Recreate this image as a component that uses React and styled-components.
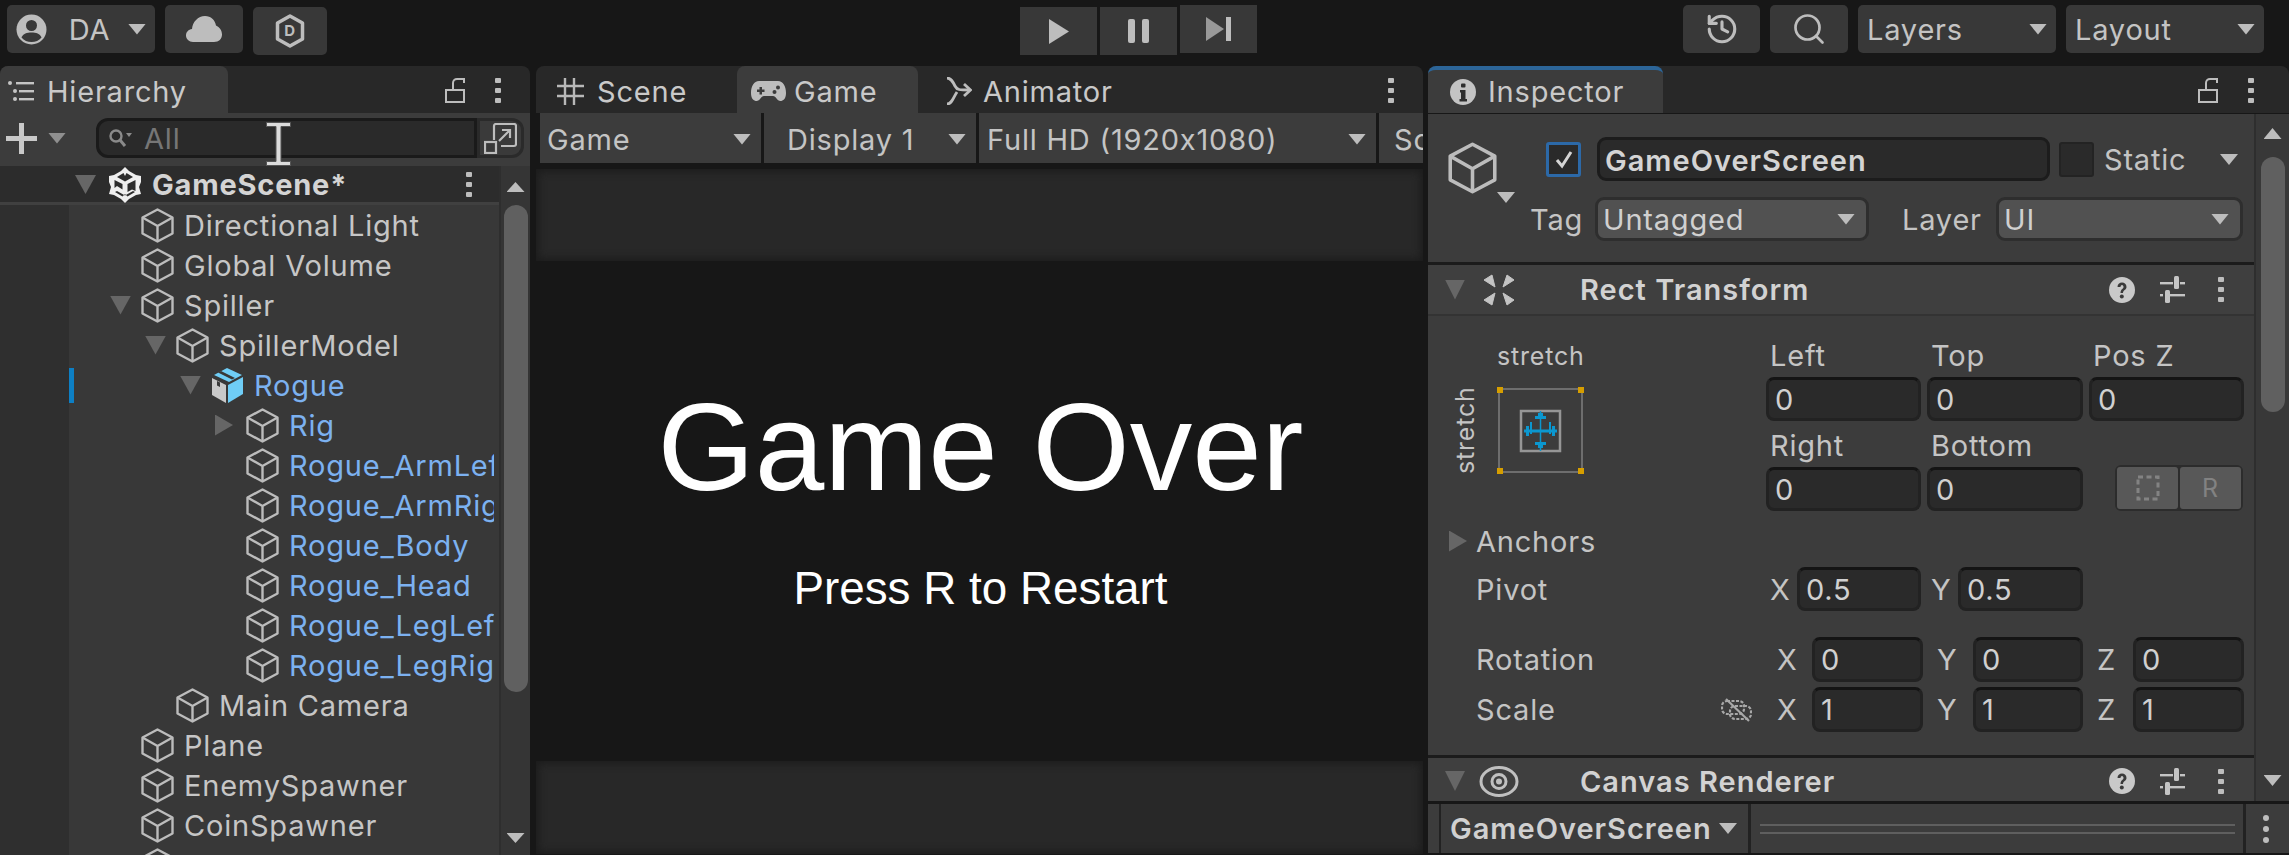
import React from "react";
import styled, { createGlobalStyle } from "styled-components";
import { History, Search } from "lucide-react";

const text = "#c4c4c4";
const blue = "#7cb1f0";
const panel = "#3c3c3c";
const tabbar = "#282828";
const dark = "#171717";
const fieldBg = "#2a2a2a";

const GlobalStyle = createGlobalStyle`
  html, body { margin: 0; padding: 0; background: ${dark}; }
  * { box-sizing: border-box; }
`;

const Page = styled.div`
  width: 2289px;
  height: 855px;
  overflow: hidden;
  background: ${dark};
  color: ${text};
  font-family: Inter, "Noto Sans", sans-serif;
  font-size: 29px;
  letter-spacing: 0.8px;
  font-feature-settings: "calt" 0;
`;

const TopBar = styled.div`
  height: 66px;
  padding-left: 7px;
  display: grid;
  grid-template-columns: 1013px 237px 1fr;
`;
const ToolGroup = styled.div`
  display: flex;
  gap: ${p => p.$gap || 10}px;
  justify-content: ${p => p.$end ? "flex-end" : "flex-start"};
  padding-right: ${p => p.$end ? 25 : 0}px;
`;
const ToolButton = styled.div`
  width: ${p => p.$w}px;
  height: 48px;
  margin-top: ${p => p.$top ?? 5}px;
  background: #383838;
  border-radius: ${p => p.$square ? 0 : 5}px;
  display: flex;
  align-items: center;
  justify-content: ${p => p.$between ? "space-between" : "center"};
  padding: 0 ${p => p.$between ? 9 : 0}px;
  color: ${text};
`;
const AccountName = styled.span`
  margin-left: 4px;
`;

const Main = styled.div`
  display: flex;
  height: 789px;
`;
const Panel = styled.div`
  width: ${p => p.$w}px;
  margin-left: ${p => p.$ml || 0}px;
  display: flex;
  flex-direction: column;
  position: relative;
`;

const TabBar = styled.div`
  height: 47px;
  flex: none;
  background: ${tabbar};
  border-radius: 8px 8px 0 0;
  display: flex;
  align-items: stretch;
  padding-right: ${p => p.$pr || 0}px;
`;
const Tab = styled.div`
  width: ${p => p.$w}px;
  padding-left: ${p => p.$pl}px;
  display: flex;
  align-items: center;
  gap: ${p => p.$gap}px;
  background: ${p => p.$active ? panel : "transparent"};
  border-radius: 8px 8px 0 0;
  border-top: ${p => p.$focus ? "4px solid #2c6598" : "none"};
  white-space: nowrap;
  color: #c9c9c9;
  padding-top: ${p => p.$focus ? 0 : 3}px;
`;
const TabTools = styled.div`
  margin-left: auto;
  display: flex;
  align-items: center;
  gap: ${p => p.$gap}px;
  padding-top: 1px;
  padding-right: ${p => p.$pr || 0}px;
`;

const KebabWrap = styled.div`
  display: flex;
  flex-direction: column;
  gap: 5px;
  width: 6px;
  margin-left: ${p => p.$ml || 0}px;
`;
const KebabDot = styled.span`
  width: 6px;
  height: 5px;
  background: #bdbdbd;
  border-radius: 1px;
`;
const Kebab = ({ ml }) => (
  <KebabWrap $ml={ml}>
    <KebabDot />
    <KebabDot />
    <KebabDot />
  </KebabWrap>
);

const Caret = styled.span`
  display: inline-block;
  flex: none;
  width: ${p => p.$w || 18}px;
  height: ${p => p.$h || 11}px;
  margin-top: ${p => p.$mt || 0}px;
  background: ${p => p.$color || "#bdbdbd"};
  clip-path: ${p => p.$right
    ? "polygon(0 0, 100% 50%, 0 100%)"
    : p.$up
      ? "polygon(50% 0, 100% 100%, 0 100%)"
      : "polygon(0 0, 100% 0, 50% 100%)"};
`;

/* hierarchy */
const SearchRow = styled.div`
  height: 53px;
  flex: none;
  background: ${panel};
  display: flex;
  align-items: center;
  padding: 0 6px 3px 6px;
`;
const PlusBox = styled.div`
  width: 90px;
  display: flex;
  align-items: center;
  gap: 11px;
`;
const SearchField = styled.div`
  width: 381px;
  height: 40px;
  background: ${fieldBg};
  border: 3px solid #1a1a1a;
  border-radius: 12px 0 0 12px;
  display: flex;
  align-items: center;
  padding-left: 9px;
  gap: 12px;
  color: #767676;
`;
const ExpandButton = styled.div`
  width: 47px;
  height: 40px;
  background: #3a3a3a;
  border: 3px solid #2a2a2a;
  border-radius: 0 12px 12px 0;
  display: flex;
  align-items: center;
  justify-content: center;
`;
const TextCursor = styled.svg`
  position: absolute;
  left: 266px;
  top: 56px;
`;

const HierarchyBody = styled.div`
  flex: 1;
  display: flex;
  min-height: 0;
  overflow: hidden;
`;
const TreeColumn = styled.div`
  width: 499px;
  flex: none;
  background: linear-gradient(to right, #2f2f2f 69px, #383838 69px);
`;
const SceneRow = styled.div`
  height: 39px;
  flex: none;
  background: #2c2c2c;
  border-bottom: 3px solid #404040;
  display: flex;
  align-items: center;
  padding: 1px 27px 0 75px;
  font-weight: 700;
  color: #d4d4d4;
`;
const SceneArrow = styled.div`
  width: 34px;
  flex: none;
  display: flex;
`;
const SceneName = styled.span`
  margin-left: 11px;
  flex: 1;
`;
const TreeRow = styled.div`
  height: 40px;
  margin-left: 69px;
  padding-left: ${p => 41 + (p.$depth - 1) * 35}px;
  padding-right: 5px;
  display: flex;
  align-items: center;
  position: relative;
  color: ${p => p.$link ? blue : "#c6c6c6"};
  &::before {
    content: "";
    display: ${p => p.$changed ? "block" : "none"};
    position: absolute;
    left: 0;
    top: 3px;
    width: 5px;
    height: 35px;
    background: #0d7fc4;
  }
`;
const ArrowSlot = styled.div`
  width: 31px;
  flex: none;
  display: flex;
  align-items: center;
`;
const TreeLabel = styled.span`
  margin-left: 10px;
  flex: 1;
  min-width: 0;
  overflow: hidden;
  white-space: nowrap;
`;

const ScrollColumn = styled.div`
  width: 31px;
  flex: none;
  background: #353535;
  border-left: 2px solid #2e2e2e;
  display: flex;
  flex-direction: column;
  align-items: center;
  padding-top: ${p => p.$pt}px;
  padding-bottom: ${p => p.$pb}px;
`;
const ScrollThumb = styled.div`
  width: 24px;
  height: ${p => p.$h}px;
  margin-top: ${p => p.$mt}px;
  margin-bottom: auto;
  background: #606060;
  border-radius: 12px;
`;

/* game view */
const GameBar = styled.div`
  height: 50px;
  flex: none;
  display: flex;
  gap: 3px;
  padding-left: 4px;
  overflow: hidden;
`;
const GameSelect = styled.div`
  width: ${p => p.$w}px;
  flex: none;
  background: ${panel};
  display: flex;
  align-items: center;
  justify-content: space-between;
  padding: 2px 10px 0 ${p => p.$pl}px;
  white-space: nowrap;
`;
const GameView = styled.div`
  flex: 1;
  margin-top: 6px;
  display: flex;
  flex-direction: column;
`;
const Letterbox = styled.div`
  height: ${p => p.$h}px;
  flex: none;
  background: #282828;
  box-shadow: inset 0 0 9px 2px #1b1b1b;
`;
const GameCanvas = styled.div`
  height: 500px;
  flex: none;
  background: ${dark};
  display: flex;
  flex-direction: column;
  align-items: center;
  padding-left: 2px;
  color: #fff;
  font-family: "Liberation Sans", Arial, sans-serif;
  letter-spacing: 0;
`;
const GameOver = styled.div`
  font-size: 125px;
  line-height: 142px;
  margin-top: 115px;
`;
const Restart = styled.div`
  font-size: 45.8px;
  line-height: 54px;
  margin-top: 44px;
`;

/* inspector */
const InspectorMain = styled.div`
  height: 687px;
  margin-top: 1px;
  flex: none;
  display: flex;
`;
const InspectorBody = styled.div`
  width: 826px;
  flex: none;
  background: ${panel};
`;
const ObjectBlock = styled.div`
  height: 148px;
  padding-top: 23px;
`;
const NameRow = styled.div`
  height: 44px;
  display: flex;
  padding-left: 20px;
`;
const IconSlot = styled.div`
  width: 98px;
  height: 44px;
  flex: none;
  display: flex;
  align-items: flex-start;
  padding-top: 5px;
`;
const CheckBox = styled.div`
  width: 35px;
  height: 35px;
  margin-top: 5px;
  flex: none;
  border-radius: 3px;
  background: #2a2a2a;
  border: ${p => p.$on ? "3px solid #2c69a8" : "2px solid #232323"};
  display: flex;
  align-items: center;
  justify-content: center;
`;
const NameField = styled.div`
  width: 453px;
  height: 44px;
  margin: 0 9px 0 16px;
  flex: none;
  background: ${fieldBg};
  border: 3px solid #1c1c1c;
  border-radius: 9px;
  padding: 2px 0 0 5px;
  display: flex;
  align-items: center;
  color: #d4d4d4;
  font-weight: 600;
  letter-spacing: 1px;
`;
const StaticLabel = styled.div`
  margin-left: 10px;
  width: 116px;
  line-height: 46px;
`;
const TagRow = styled.div`
  height: 44px;
  margin-top: 16px;
  display: flex;
  align-items: center;
  padding-left: 102px;
`;
const TagLabel = styled.span`
  width: ${p => p.$w}px;
  margin-left: ${p => p.$ml || 0}px;
  flex: none;
`;
const TagSelect = styled.div`
  width: ${p => p.$w}px;
  height: 44px;
  flex: none;
  background: #515151;
  border: 3px solid #2e2e2e;
  border-radius: 9px;
  display: flex;
  align-items: center;
  justify-content: space-between;
  padding: 0 11px 0 5px;
  color: #d0d0d0;
`;
const Divider = styled.div`
  height: 3px;
  background: #1b1b1b;
`;
const ComponentHeader = styled.div`
  height: ${p => p.$h}px;
  background: #3f3f3f;
  border-bottom: ${p => p.$line ? "2px solid #333" : "none"};
  display: flex;
  align-items: center;
  padding: ${p => p.$pt || 0}px 30px 0 17px;
`;
const HeaderIcon = styled.div`
  width: 32px;
  margin-left: 18px;
  display: flex;
  justify-content: center;
  & > svg { flex: none; }
`;
const HeaderTitle = styled.div`
  margin-left: 65px;
  font-weight: 600;
  font-size: 29px;
  letter-spacing: 1px;
  color: #d2d2d2;
  flex: 1;
`;
const HeaderTools = styled.div`
  display: flex;
  align-items: center;
  gap: 25px;
`;

const RectBody = styled.div`
  height: 439px;
`;
const RectTop = styled.div`
  display: flex;
  padding-top: 25px;
`;
const AnchorColumn = styled.div`
  width: 338px;
  flex: none;
  display: grid;
  grid-template-columns: 44px 87px;
  grid-template-rows: 30px 87px;
  row-gap: 16px;
  padding-left: 25px;
  font-size: 25px;
`;
const AnchorTop = styled.div`
  grid-column: 2;
  text-align: center;
  line-height: 30px;
  white-space: nowrap;
`;
const AnchorSide = styled.div`
  grid-column: 1;
  writing-mode: vertical-rl;
  transform: rotate(180deg);
  text-align: center;
  line-height: 24px;
  justify-self: start;
`;
const FieldGrid = styled.div`
  display: grid;
  grid-template-columns: 155px 156px 155px;
  column-gap: 6px;
  row-gap: 10px;
`;
const FieldCell = styled.div`
  display: flex;
  flex-direction: column;
  gap: 6px;
`;
const SmallLabel = styled.div`
  height: 30px;
  line-height: 30px;
  padding-left: 4px;
`;
const NumField = styled.div`
  width: ${p => p.$w ? `${p.$w}px` : "100%"};
  height: ${p => p.$h || 44}px;
  flex: none;
  background: ${fieldBg};
  border: 3px solid #222;
  border-top-color: #141414;
  border-radius: 8px;
  padding-left: 6px;
  display: flex;
  align-items: center;
  color: #d0d0d0;
`;
const ResetPair = styled.div`
  grid-column: 3;
  align-self: end;
  justify-self: end;
  width: 128px;
  height: 46px;
  margin-right: 1px;
  display: flex;
  gap: 2px;
  background: #2c2c2c;
  border-radius: 6px;
  padding: 2px;
`;
const ResetButton = styled.div`
  flex: 1;
  background: #585858;
  border-radius: 3px;
  display: flex;
  align-items: center;
  justify-content: center;
  color: #828282;
  font-size: 25px;
`;
const PropertyRow = styled.div`
  display: flex;
  align-items: center;
  padding-left: ${p => p.$pl || 48}px;
  margin-top: ${p => p.$mt}px;
  height: ${p => p.$h}px;
`;
const RowLabel = styled.div`
  width: ${p => p.$w}px;
  flex: none;
  margin-left: ${p => p.$ml || 0}px;
  display: flex;
  align-items: center;
  justify-content: space-between;
  padding-right: ${p => p.$pr || 0}px;
`;
const AxisLabel = styled.span`
  width: ${p => p.$w}px;
  margin-left: ${p => p.$ml || 0}px;
  flex: none;
`;

const InspectorScroll = styled(ScrollColumn)`
  width: 35px;
  background: #383838;
`;

const PreviewBar = styled.div`
  height: 49px;
  margin-top: 3px;
  flex: none;
  background: ${panel};
  display: flex;
  align-items: stretch;
`;
const PreviewEdge = styled.div`
  width: 13px;
  flex: none;
  border-right: 2px solid #222;
`;
const PreviewName = styled.div`
  width: 310px;
  flex: none;
  border-right: 3px solid #222;
  padding: 0 11px 0 9px;
  display: flex;
  align-items: center;
  justify-content: space-between;
  font-weight: 600;
  letter-spacing: 1px;
  color: #d0d0d0;
  white-space: nowrap;
`;
const PreviewLines = styled.div`
  width: 495px;
  flex: none;
  padding: 0 8px 0 9px;
  display: flex;
  flex-direction: column;
  justify-content: center;
  gap: 6px;
  border-right: 3px solid #222;
`;
const PreviewLine = styled.div`
  height: 2px;
  background: #5f5f5f;
`;
const PreviewMenu = styled.div`
  flex: 1;
  display: flex;
  align-items: center;
  padding-left: 17px;
`;
const RoundDot = styled.span`
  width: 6px;
  height: 6px;
  border-radius: 50%;
  background: #bdbdbd;
`;

/* drawings */
const Cube = ({ size = 33, color = "#bcbcbc" }) => (
  <svg width={size} height={size * 35 / 33} viewBox="0 0 33 35" fill="none" stroke={color} strokeWidth="2.4" strokeLinejoin="round" style={{ flex: "none" }}>
    <path d="M16.5 1.5 31.5 9.5V25.5L16.5 33.5 1.5 25.5V9.5Z" />
    <path d="M1.5 9.5 16.5 18 31.5 9.5M16.5 18V33.5" />
  </svg>
);

const UnityLogo = () => (
  <svg width="32" height="36" viewBox="0 0 32 36" style={{ flex: "none" }}>
    <path fill="#efefef" d="M16 0 20 4 27 8 32 9 32 15 30 20 32 27 27 28 20 32 16 36 12 32 5 28 0 27 2 20 0 15 0 9 5 8 12 4Z" />
    <path fill="#2c2c2c" d="M14.5 6 8 10 16 14.500 24 10 17.500 6 16 9ZM5.500 13 5.500 21 8 19 13.500 22.500 13.500 17ZM26.500 13 18.500 17 18.500 25 23 22.500 26.500 24Z" />
    <path fill="#2c2c2c" d="M6 25 13.500 29.500 16 27 18.500 29.500 26 25 24 24 16 28.500 8 24Z" />
  </svg>
);

const PrefabBox = () => (
  <svg width="33" height="35" viewBox="0 0 33 35" style={{ flex: "none" }}>
    <path fill="#6fcdf6" d="M17 17 32 9V26L17 35Z" />
    <path fill="#c9c9c9" d="M1 10 15 17V35L1 27Z" />
    <path fill="#6fcdf6" d="M16 0 31 7 18 14 3 7Z" />
    <path fill="#383838" d="M10 3 24 10 21 11.500 7 4.500Z" />
    <path fill="#383838" d="M6 13 9 14.500V19L6 17.500Z" />
  </svg>
);

const UserIcon = () => (
  <svg width="31" height="31" viewBox="0 0 31 31" style={{ flex: "none" }}>
    <circle cx="15.5" cy="15.500" r="15" fill="#bdbdbd" />
    <circle cx="15.5" cy="11.500" r="5.500" fill="#383838" />
    <path fill="#383838" d="M5.500 23.500C7 19.500 11 18.500 15.500 18.500S24 19.500 25.500 23.500C23 26.500 19.500 28 15.500 28S8 26.500 5.500 23.500Z" />
  </svg>
);

const CloudIcon = () => (
  <svg width="36" height="26" viewBox="0 0 36 26">
    <path fill="#bdbdbd" d="M7 26C3 26 0 23 0 19.500 0 16 2.500 13.500 6 13 6.500 6 12 0 19 0 25 0 29 4 30 9.500 33.500 11 36 14.500 36 18.500 36 23 33 26 28 26Z" />
  </svg>
);

const DashIcon = () => (
  <svg width="30" height="34" viewBox="0 0 30 34" fill="none">
    <path d="M15 2 27.500 9V25L15 32 2.500 25V9Z" stroke="#bdbdbd" strokeWidth="3.500" strokeLinejoin="round" />
    <text x="15" y="22" textAnchor="middle" fontSize="15" fontWeight="700" fill="#bdbdbd" fontFamily="Inter, sans-serif">D</text>
  </svg>
);

const PlayIcon = () => (
  <svg width="20" height="25" viewBox="0 0 20 25"><path fill="#bdbdbd" d="M0 0 20 12.500 0 25Z" /></svg>
);
const PauseIcon = () => (
  <svg width="21" height="24" viewBox="0 0 21 24"><rect width="7" height="24" rx="2" fill="#bdbdbd" /><rect x="14" width="7" height="24" rx="2" fill="#bdbdbd" /></svg>
);
const StepIcon = () => (
  <svg width="25" height="24" viewBox="0 0 25 24"><path fill="#999" d="M0 0 18 12 0 24Z" /><rect x="20" width="5" height="24" fill="#bdbdbd" /></svg>
);

const ListIcon = () => (
  <svg width="26" height="22" viewBox="0 0 26 22" fill="#c4c4c4" style={{ flex: "none" }}>
    <rect y="1" width="4" height="4" rx="2" /><rect x="8" y="2" width="18" height="2.400" />
    <rect x="5" y="9" width="4" height="4" rx="2" /><rect x="11" y="10" width="15" height="2.400" />
    <rect x="5" y="17" width="4" height="4" rx="2" /><rect x="11" y="18" width="15" height="2.400" />
  </svg>
);

const LockIcon = () => (
  <svg width="20" height="25" viewBox="0 0 20 25" fill="none" stroke="#bdbdbd" strokeWidth="2">
    <rect x="1" y="12" width="18" height="12" />
    <path d="M8 12V5C8 2.500 10 1 12 1H19V5" />
  </svg>
);

const PlusIcon = () => (
  <svg width="31" height="31" viewBox="0 0 31 31"><path fill="#c9c9c9" d="M13 0h5v13h13v5H18v13h-5V18H0v-5h13Z" /></svg>
);

const SearchSmall = () => (
  <svg width="24" height="20" viewBox="0 0 24 20" fill="none" stroke="#8a8a8a" strokeWidth="2.400" style={{ flex: "none" }}>
    <circle cx="8" cy="8" r="5.500" />
    <path d="M12 12 17 18" strokeWidth="3" />
    <path d="M18 5h6l-3 4Z" fill="#8a8a8a" stroke="none" />
  </svg>
);

const ExpandIcon = () => (
  <svg width="33" height="31" viewBox="0 0 33 31" fill="none" stroke="#bdbdbd" strokeWidth="2.200">
    <path d="M10 17V3a2 2 0 0 1 2-2h18a2 2 0 0 1 2 2v18a2 2 0 0 1-2 2H17" />
    <rect x="1" y="19" width="11" height="11" />
    <path d="M15 18 25 8M18 7h8v8" />
  </svg>
);

const CursorIcon = () => (
  <TextCursor width="25" height="44" viewBox="0 0 25 44">
    <path fill="#dcdcdc" stroke="#555" strokeWidth="1" d="M.5.5h24v4H15v35h9.500v4H.5v-4H10V4.500H.5Z" />
  </TextCursor>
);

const HashIcon = () => (
  <svg width="27" height="27" viewBox="0 0 27 27" fill="none" stroke="#b8b8b8" strokeWidth="2.400" style={{ flex: "none" }}>
    <path d="M8 0V27M17 0V27M0 8H27M0 18H27" />
  </svg>
);

const PadIcon = () => (
  <svg width="35" height="20" viewBox="0 0 35 20" style={{ flex: "none" }}>
    <path fill="#bdbdbd" d="M8 0H27C32 0 35 5 35 12 35 18 32 20 29.500 20 26 20 25 15 22 15H13C10 15 9 20 5.500 20 3 20 0 18 0 12 0 5 3 0 8 0Z" />
    <path fill="#3c3c3c" d="M8.500 6h2.500v2.500h2.500V11H11v2.500H8.500V11H6V8.500h2.500Z" />
    <circle cx="27" cy="6.500" r="2" fill="#3c3c3c" />
    <circle cx="23.500" cy="11" r="2" fill="#3c3c3c" />
  </svg>
);

const AnimatorIcon = () => (
  <svg width="26" height="28" viewBox="0 0 26 28" fill="none" stroke="#bdbdbd" strokeWidth="2.800" style={{ flex: "none" }}>
    <path d="M1 1C5 1 7 5 9 9 11 13 13 13 24 13" />
    <path d="M1 27C6 27 7 21 11 15" />
    <path d="M18 7 24.500 13 18 19" />
  </svg>
);

const InfoIcon = () => (
  <svg width="26" height="26" viewBox="0 0 26 26" style={{ flex: "none" }}>
    <circle cx="13" cy="13" r="13" fill="#c4c4c4" />
    <rect x="11" y="4.500" width="4.500" height="4" rx="1" fill="#2e2e2e" />
    <path d="M10 11h5.500v9H17v2.500H9.500V20H11v-6.500h-1Z" fill="#2e2e2e" />
  </svg>
);

const Tick = () => (
  <svg width="22" height="22" viewBox="0 0 22 22" fill="none" stroke="#d4d4d4" strokeWidth="3">
    <path d="M4 11 9 17 18 3" />
  </svg>
);

const RectIcon = () => (
  <svg width="32" height="32" viewBox="-1 -1 32 32" fill="#c4c4c4" stroke="#c4c4c4" strokeWidth="1" strokeLinejoin="round">
    <path d="M0 5 8 0 11 12ZM30 5 23 0 19 12ZM0 25 11 18 8 30ZM30 25 19 18 23 30Z" />
  </svg>
);

const HelpIcon = () => (
  <svg width="26" height="26" viewBox="0 0 26 26" style={{ flex: "none" }}>
    <circle cx="13" cy="13" r="13" fill="#c9c9c9" />
    <path d="M8.500 10C8.500 7 10.500 5.500 13 5.500S17.500 7 17.500 10C17.500 13 14 13 14 16H11.500C11.500 12 14.500 12 14.500 10 14.500 9 14 8 13 8S11.500 9 11.500 10Z" fill="#3a3a3a" />
    <circle cx="12.800" cy="19.500" r="2" fill="#3a3a3a" />
  </svg>
);

const SlidersIcon = () => (
  <svg width="25" height="27" viewBox="0 0 25 27" fill="#c4c4c4" style={{ flex: "none" }}>
    <rect y="6" width="13" height="2.400" /><rect x="20" y="6" width="5" height="2.400" />
    <rect x="14" width="5" height="13" rx="1.500" />
    <rect y="18" width="3" height="2.400" /><rect x="10" y="18" width="15" height="2.400" />
    <rect x="5" y="14" width="5" height="13" rx="1.500" />
  </svg>
);

const EyeIcon = () => (
  <svg width="40" height="31" viewBox="0 0 40 31" fill="none" stroke="#c0c0c0" strokeWidth="3">
    <ellipse cx="20" cy="15.500" rx="18" ry="14" />
    <circle cx="20" cy="15.500" r="7" />
    <circle cx="20" cy="15.500" r="1.500" />
  </svg>
);

const LinkOff = () => (
  <svg width="31" height="24" viewBox="0 0 31 24" fill="none" stroke="#a8a8a8" strokeWidth="2.200" strokeDasharray="3 1.500">
    <rect x="1" y="3" width="22" height="13" rx="5" />
    <rect x="9" y="8" width="21" height="13" rx="5" />
    <path d="M5 1 28 23" strokeDasharray="none" />
  </svg>
);

const AnchorWidget = () => (
  <svg width="87" height="87" viewBox="0 0 87 87" fill="none">
    <rect x="2" y="2" width="83" height="83" stroke="#6e6e6e" strokeWidth="2" />
    <rect x="0" y="0" width="6" height="6" fill="#d69e00" />
    <rect x="81" y="0" width="6" height="6" fill="#d69e00" />
    <rect x="0" y="81" width="6" height="6" fill="#d69e00" />
    <rect x="81" y="81" width="6" height="6" fill="#d69e00" />
    <rect x="24" y="24" width="39" height="40" stroke="#969696" strokeWidth="2.500" />
    <path d="M43.500 24V64M27 44H60" stroke="#0b97cf" strokeWidth="1.500" />
    <path d="M27 42.500H60V45.500H27Z" fill="#0b97cf" />
    <path d="M38 29H49V32H38ZM41 26H46V29H41ZM38 55H49V58H38ZM41 58H46V61H41ZM33 35H35V47H33ZM29 39H32V49H29ZM52 35H54V47H52ZM55 39H58V49H55Z" fill="#0b97cf" />
  </svg>
);

const DashedRect = () => (
  <svg width="24" height="26" viewBox="0 0 24 26" fill="none" stroke="#838383" strokeWidth="3" strokeDasharray="5 3.500">
    <rect x="2" y="2" width="20" height="22" />
  </svg>
);

const treeRows = [
  { name: "Directional Light", depth: 1 },
  { name: "Global Volume", depth: 1 },
  { name: "Spiller", depth: 1, open: true },
  { name: "SpillerModel", depth: 2, open: true },
  { name: "Rogue", depth: 3, open: true, link: true, prefab: true, changed: true },
  { name: "Rig", depth: 4, closed: true, link: true },
  { name: "Rogue_ArmLeft", depth: 4, link: true },
  { name: "Rogue_ArmRight", depth: 4, link: true },
  { name: "Rogue_Body", depth: 4, link: true },
  { name: "Rogue_Head", depth: 4, link: true },
  { name: "Rogue_LegLeft", depth: 4, link: true },
  { name: "Rogue_LegRight", depth: 4, link: true },
  { name: "Main Camera", depth: 2 },
  { name: "Plane", depth: 1 },
  { name: "EnemySpawner", depth: 1 },
  { name: "CoinSpawner", depth: 1 },
  { name: "Canvas", depth: 1 },
];

const Hierarchy = () => (
  <Panel $w={530}>
    <TabBar $pr={29}>
      <Tab $w={228} $pl={8} $gap={13} $active><ListIcon />Hierarchy</Tab>
      <TabTools $gap={30}><LockIcon /><Kebab /></TabTools>
    </TabBar>
    <SearchRow>
      <PlusBox><PlusIcon /><Caret $w={18} $h={11} $color="#8f8f8f" /></PlusBox>
      <SearchField><SearchSmall />All</SearchField>
      <ExpandButton><ExpandIcon /></ExpandButton>
    </SearchRow>
    <CursorIcon />
    <HierarchyBody>
      <TreeColumn>
        <SceneRow>
          <SceneArrow><Caret $w={21} $h={19} $color="#666" /></SceneArrow>
          <UnityLogo />
          <SceneName>GameScene*</SceneName>
          <Kebab />
        </SceneRow>
        {treeRows.map(row => (
          <TreeRow key={row.name} $depth={row.depth} $link={row.link} $changed={row.changed}>
            <ArrowSlot>
              {row.open && <Caret $w={21} $h={19} $color="#666" />}
              {row.closed && <Caret $right $w={18} $h={21} $color="#666" />}
            </ArrowSlot>
            {row.prefab ? <PrefabBox /> : <Cube />}
            <TreeLabel>{row.name}</TreeLabel>
          </TreeRow>
        ))}
      </TreeColumn>
      <ScrollColumn $pt={16} $pb={12}>
        <Caret $up $w={18} $h={10} />
        <ScrollThumb $h={487} $mt={13} />
        <Caret $w={18} $h={10} />
      </ScrollColumn>
    </HierarchyBody>
  </Panel>
);

const GamePanel = () => (
  <Panel $w={887} $ml={6}>
    <TabBar $pr={29}>
      <Tab $w={201} $pl={21} $gap={13}><HashIcon />Scene</Tab>
      <Tab $w={181} $pl={14} $gap={8} $active><PadIcon />Game</Tab>
      <Tab $w={250} $pl={28} $gap={11}><AnimatorIcon />Animator</Tab>
      <TabTools $gap={0}><Kebab /></TabTools>
    </TabBar>
    <GameBar>
      <GameSelect $w={221} $pl={7}>Game<Caret /></GameSelect>
      <GameSelect $w={212} $pl={23}>Display 1<Caret /></GameSelect>
      <GameSelect $w={397} $pl={8}>Full HD (1920x1080)<Caret /></GameSelect>
      <GameSelect $w={60} $pl={15}>Scale</GameSelect>
    </GameBar>
    <GameView>
      <Letterbox $h={92} />
      <GameCanvas>
        <GameOver>Game Over</GameOver>
        <Restart>Press R to Restart</Restart>
      </GameCanvas>
      <Letterbox $h={93} />
    </GameView>
  </Panel>
);

const Inspector = () => (
  <Panel $w={861} $ml={5}>
    <TabBar>
      <Tab $w={235} $pl={22} $gap={12} $active $focus><InfoIcon />Inspector</Tab>
      <TabTools $gap={30} $pr={35}><LockIcon /><Kebab /></TabTools>
    </TabBar>
    <InspectorMain>
      <InspectorBody>
        <ObjectBlock>
          <NameRow>
            <IconSlot><Cube size={49} /><Caret $w={18} $h={11} $mt={50} /></IconSlot>
            <CheckBox $on><Tick /></CheckBox>
            <NameField>GameOverScreen</NameField>
            <CheckBox />
            <StaticLabel>Static</StaticLabel>
            <Caret $mt={17} />
          </NameRow>
          <TagRow>
            <TagLabel $w={65}>Tag</TagLabel>
            <TagSelect $w={274}>Untagged<Caret /></TagSelect>
            <TagLabel $w={94} $ml={33}>Layer</TagLabel>
            <TagSelect $w={247}>UI<Caret /></TagSelect>
          </TagRow>
        </ObjectBlock>
        <Divider />
        <ComponentHeader $h={51} $line>
          <Caret $w={20} $h={20} $color="#666" />
          <HeaderIcon><RectIcon /></HeaderIcon>
          <HeaderTitle>Rect Transform</HeaderTitle>
          <HeaderTools><HelpIcon /><SlidersIcon /><Kebab ml={8} /></HeaderTools>
        </ComponentHeader>
        <RectBody>
          <RectTop>
            <AnchorColumn>
              <AnchorTop>stretch</AnchorTop>
              <AnchorSide>stretch</AnchorSide>
              <AnchorWidget />
            </AnchorColumn>
            <FieldGrid>
              <FieldCell><SmallLabel>Left</SmallLabel><NumField>0</NumField></FieldCell>
              <FieldCell><SmallLabel>Top</SmallLabel><NumField>0</NumField></FieldCell>
              <FieldCell><SmallLabel>Pos Z</SmallLabel><NumField>0</NumField></FieldCell>
              <FieldCell><SmallLabel>Right</SmallLabel><NumField>0</NumField></FieldCell>
              <FieldCell><SmallLabel>Bottom</SmallLabel><NumField>0</NumField></FieldCell>
              <ResetPair>
                <ResetButton><DashedRect /></ResetButton>
                <ResetButton>R</ResetButton>
              </ResetPair>
            </FieldGrid>
          </RectTop>
          <PropertyRow $mt={15} $h={30} $pl={21}>
            <Caret $right $w={18} $h={21} $color="#666" />
            <RowLabel $w={200} $ml={9}>Anchors</RowLabel>
          </PropertyRow>
          <PropertyRow $mt={11} $h={44}>
            <RowLabel $w={294}>Pivot</RowLabel>
            <AxisLabel $w={27}>X</AxisLabel>
            <NumField $w={124}>0.5</NumField>
            <AxisLabel $w={27} $ml={10}>Y</AxisLabel>
            <NumField $w={125}>0.5</NumField>
          </PropertyRow>
          <PropertyRow $mt={26} $h={45}>
            <RowLabel $w={301}>Rotation</RowLabel>
            <AxisLabel $w={35}>X</AxisLabel>
            <NumField $w={111} $h={45}>0</NumField>
            <AxisLabel $w={36} $ml={14}>Y</AxisLabel>
            <NumField $w={110} $h={45}>0</NumField>
            <AxisLabel $w={36} $ml={14}>Z</AxisLabel>
            <NumField $w={111} $h={45}>0</NumField>
          </PropertyRow>
          <PropertyRow $mt={5} $h={45}>
            <RowLabel $w={301} $pr={25}>Scale<LinkOff /></RowLabel>
            <AxisLabel $w={35}>X</AxisLabel>
            <NumField $w={111} $h={45}>1</NumField>
            <AxisLabel $w={36} $ml={14}>Y</AxisLabel>
            <NumField $w={110} $h={45}>1</NumField>
            <AxisLabel $w={36} $ml={14}>Z</AxisLabel>
            <NumField $w={111} $h={45}>1</NumField>
          </PropertyRow>
        </RectBody>
        <Divider />
        <ComponentHeader $h={43} $pt={3}>
          <Caret $w={20} $h={20} $color="#666" />
          <HeaderIcon><EyeIcon /></HeaderIcon>
          <HeaderTitle>Canvas Renderer</HeaderTitle>
          <HeaderTools><HelpIcon /><SlidersIcon /><Kebab ml={8} /></HeaderTools>
        </ComponentHeader>
      </InspectorBody>
      <InspectorScroll $pt={14} $pb={15}>
        <Caret $up $w={18} $h={11} />
        <ScrollThumb $h={255} $mt={18} />
        <Caret $w={18} $h={11} />
      </InspectorScroll>
    </InspectorMain>
    <PreviewBar>
      <PreviewEdge />
      <PreviewName>GameOverScreen<Caret /></PreviewName>
      <PreviewLines><PreviewLine /><PreviewLine /></PreviewLines>
      <PreviewMenu><KebabWrap><RoundDot /><RoundDot /><RoundDot /></KebabWrap></PreviewMenu>
    </PreviewBar>
  </Panel>
);

export default function App() {
  return (
    <Page>
      <GlobalStyle />
      <TopBar>
        <ToolGroup>
          <ToolButton $w={148} $between>
            <UserIcon /><AccountName>DA</AccountName><Caret />
          </ToolButton>
          <ToolButton $w={78}><CloudIcon /></ToolButton>
          <ToolButton $w={74} $top={7}><DashIcon /></ToolButton>
        </ToolGroup>
        <ToolGroup $gap={3}>
          <ToolButton $w={77} $square $top={7}><PlayIcon /></ToolButton>
          <ToolButton $w={77} $square $top={7}><PauseIcon /></ToolButton>
          <ToolButton $w={77} $square><StepIcon /></ToolButton>
        </ToolGroup>
        <ToolGroup $end>
          <ToolButton $w={77}><History size={34} strokeWidth={2.2} color="#bdbdbd" /></ToolButton>
          <ToolButton $w={78}><Search size={36} strokeWidth={1.8} color="#bdbdbd" /></ToolButton>
          <ToolButton $w={198} $between>Layers<Caret /></ToolButton>
          <ToolButton $w={198} $between>Layout<Caret /></ToolButton>
        </ToolGroup>
      </TopBar>
      <Main>
        <Hierarchy />
        <GamePanel />
        <Inspector />
      </Main>
    </Page>
  );
}
